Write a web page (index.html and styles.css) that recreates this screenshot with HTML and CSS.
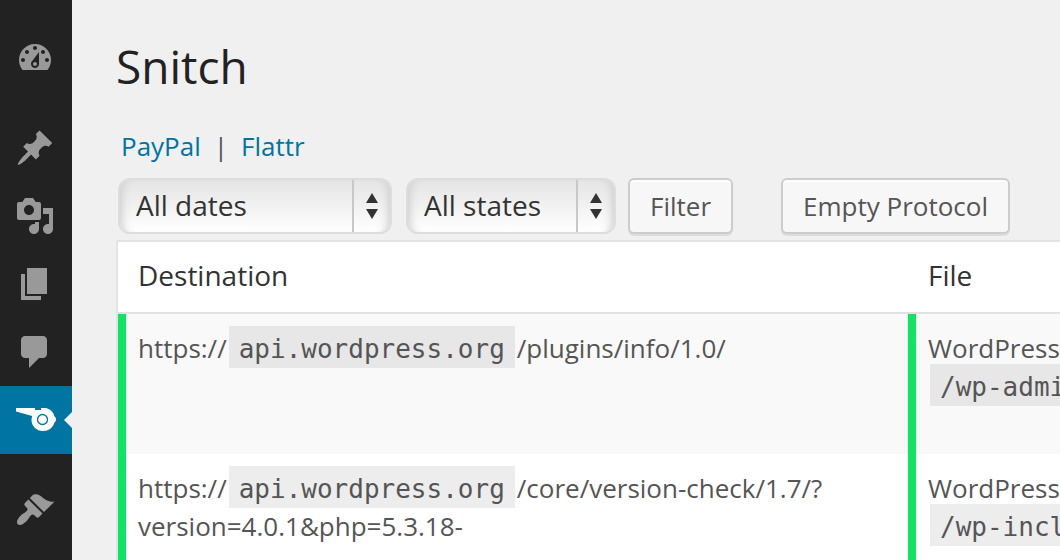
FILE: index.html
```html
<!DOCTYPE html>
<html lang="en">
<head>
<meta charset="utf-8">
<title>Snitch</title>
<link rel="stylesheet" href="styles.css">
</head>
<body>
<div class="layout">
  <nav class="menu" aria-label="Main menu">
    <a class="item" href="#dashboard" aria-label="Dashboard"><svg viewBox="0 0 20 20"><path fill-rule="evenodd" d="M3.76 16h12.48c1.1-1.37 1.76-3.11 1.76-5 0-4.42-3.58-8-8-8s-8 3.58-8 8c0 1.89.66 3.63 1.76 5zM10 4c.55 0 1 .45 1 1s-.45 1-1 1-1-.45-1-1 .45-1 1-1zM6 6c.55 0 1 .45 1 1s-.45 1-1 1-1-.45-1-1 .45-1 1-1zm8 0c.55 0 1 .45 1 1s-.45 1-1 1-1-.45-1-1 .45-1 1-1zm-5.37 5.55L12 7v6c0 1.1-.9 2-2 2s-2-.9-2-2c0-.57.24-1.08.63-1.45zM4 10c.55 0 1 .45 1 1s-.45 1-1 1-1-.45-1-1 .45-1 1-1zm12 0c.55 0 1 .45 1 1s-.45 1-1 1-1-.45-1-1 .45-1 1-1zm-5 3c0-.55-.45-1-1-1s-1 .45-1 1 .45 1 1 1 1-.45 1-1z"/></svg></a>
    <a class="item spaced" href="#posts" aria-label="Posts"><svg viewBox="0 0 20 20"><path d="M10.44 3.02l1.82-1.82 6.36 6.35-1.83 1.82c-1.05-.68-2.48-.57-3.41.36l-.75.75c-.92.93-1.04 2.35-.35 3.41l-1.83 1.82-2.41-2.41-2.8 2.79c-.42.42-3.38 2.71-3.8 2.29s1.86-3.39 2.28-3.81l2.79-2.79L4.1 9.36l1.83-1.82c1.05.69 2.48.57 3.4-.36l.75-.75c.93-.92 1.05-2.35.36-3.41z"/></svg></a>
    <a class="item" href="#media" aria-label="Media"><svg viewBox="0 0 20 20"><path fill-rule="evenodd" d="M13 11V4c0-.55-.45-1-1-1h-1.67L9 1H5L3.67 3H2c-.55 0-1 .45-1 1v7c0 .55.45 1 1 1h10c.55 0 1-.45 1-1zM7 4.5c1.38 0 2.5 1.12 2.5 2.5S8.38 9.5 7 9.5 4.5 8.38 4.5 7 5.62 4.5 7 4.5zM14 6h5v10.5c0 1.38-1.12 2.5-2.5 2.5S14 17.88 14 16.5s1.12-2.5 2.5-2.5c.17 0 .34.02.5.05V9h-3V6zm-4 8.05V13h2v3.5c0 1.38-1.12 2.5-2.5 2.5S7 17.88 7 16.5 8.12 14 9.5 14c.17 0 .34.02.5.05z"/></svg></a>
    <a class="item" href="#pages" aria-label="Pages"><svg viewBox="0 0 20 20"><path d="M6 15V2h10v13H6zm-1 1h8v2H3V5h2v11z"/></svg></a>
    <a class="item" href="#comments" aria-label="Comments"><svg viewBox="0 0 20 20"><path d="M5 2h9q.82 0 1.41.59T16 4v7q0 .82-.59 1.41T14 13h-2l-5 5v-5H5q-.82 0-1.41-.59T3 11V4q0-.82.59-1.41T5 2z"/></svg></a>
    <a class="item current" href="#snitch" aria-label="Snitch" aria-current="page"><svg viewBox="0 0 40 40"><path d="M1 8H20V10H26V8H30C35 8.500 38.500 12 39.500 16.500Q41 17 41 19.500Q41 21.500 39.500 22.500C38 27.500 33.500 31 28 31C21.500 31 16.500 26 16.500 20Q16.500 18 17.200 16L1 11.500Z"/><circle class="hole" cx="27.500" cy="19.500" r="5"/></svg></a>
    <a class="item spaced" href="#appearance" aria-label="Appearance"><svg viewBox="0 0 20 20"><path d="M14.48 11.06L7.41 3.99l1.5-1.5c.5-.56 2.3-.47 3.51.32 1.21.8 1.43 1.28 2.91 2.1 1.18.64 2.45 1.26 4.45.85zm-.71.71L6.7 4.7 4.93 6.47c-.39.39-.39 1.02 0 1.41l1.06 1.06c.39.39.39 1.03 0 1.42-.6.6-1.43 1.11-2.21 1.69-.35.26-.7.53-1.01.84C1.43 14.23.4 16.08 1.4 17.07c.99 1 2.84-.03 4.18-1.36.31-.31.58-.66.85-1.02.57-.78 1.08-1.61 1.69-2.21.39-.39 1.02-.39 1.41 0l1.06 1.06c.39.39 1.02.39 1.41 0z"/></svg></a>
  </nav>
  <main class="content">
    <h1 class="title">Snitch</h1>
    <div class="links"><a href="#paypal">PayPal</a><span>|</span><a href="#flattr">Flattr</a></div>
    <form class="toolbar">
      <div class="picker dates">
        <select aria-label="Filter by date"><option>All dates</option></select>
        <svg class="arrows" viewBox="0 0 12 26"><path d="M6 0L12 10H0zM0 16H12L6 26z"/></svg>
      </div>
      <div class="picker states">
        <select aria-label="Filter by state"><option>All states</option></select>
        <svg class="arrows" viewBox="0 0 12 26"><path d="M6 0L12 10H0zM0 16H12L6 26z"/></svg>
      </div>
      <button class="button" type="button">Filter</button>
      <button class="button empty" type="button">Empty Protocol</button>
    </form>
    <table class="log">
      <colgroup><col class="col-destination"><col class="col-file"></colgroup>
      <thead><tr><th scope="col">Destination</th><th scope="col">File</th></tr></thead>
      <tbody>
        <tr><td>https://<code>api.wordpress.org</code>/plugins/info/1.0/</td><td>WordPress:<br><code>/wp-admin</code></td></tr>
        <tr><td>https://<code>api.wordpress.org</code>/core/version-check/1.7/?<br>version=4.0.1&amp;php=5.3.18-</td><td>WordPress:<br><code>/wp-includes</code></td></tr>
      </tbody>
    </table>
  </main>
</div>
</body>
</html>
```

FILE: styles.css
```css
* { box-sizing: border-box; }

body {
  margin: 0;
  background: #f0f0f0;
  color: #555;
  font-family: "Open Sans", sans-serif;
  font-size: 26px;
  line-height: 38px;
  overflow: hidden;
}

a { color: #0074a2; text-decoration: none; }

.layout { display: flex; height: 100vh; }

.menu {
  flex: none;
  width: 72px;
  padding-top: 24px;
  background: #222;
}

.item {
  display: block;
  position: relative;
  padding: 14px 17px 14px 15px;
}

.item.spaced { margin-top: 22px; }

.item svg {
  display: block;
  width: 40px;
  height: 40px;
  fill: #999;
  overflow: visible;
}

.item.current { background: #0074a2; }
.item.current svg { fill: #fff; }
.item .hole { fill: none; stroke: #0074a2; stroke-width: 1.3; }

.item.current::after {
  content: "";
  position: absolute;
  right: 0;
  top: 26px;
  border: 8px solid transparent;
  border-left: 0;
  border-right-color: #f0f0f0;
}

.content {
  flex: 1;
  min-width: 0;
  padding: 37px 0 0 44px;
  overflow: hidden;
}

.title {
  margin: 0;
  color: #222;
  font-size: 46px;
  font-weight: 400;
  line-height: 58px;
}

.links {
  display: flex;
  gap: 12px;
  margin-top: 32px;
  padding-left: 5px;
}

.links span { padding: 0 1px; }

.toolbar {
  display: flex;
  align-items: center;
  margin: 13px 0 6px 2px;
}

.picker { display: grid; align-items: center; margin-right: 14px; }
.picker > * { grid-area: 1 / 1; }
.picker.dates { width: 274px; }
.picker.states { width: 210px; margin-right: 12px; }

.picker select {
  appearance: none;
  width: 100%;
  height: 56px;
  padding: 0 16px 2px;
  border: 2px solid #ddd;
  border-radius: 12px;
  background:
    linear-gradient(#c8c8c8, #c8c8c8) right 36px top / 2px 100% no-repeat,
    linear-gradient(#e4e4e4, #fff);
  box-shadow: inset 10px 0 8px -8px #ccc, inset -10px 0 8px -8px #ccc;
  color: #333;
  font: inherit;
  font-size: 28px;
}

.arrows {
  justify-self: end;
  width: 12px;
  height: 26px;
  margin-right: 14px;
  fill: #333;
  pointer-events: none;
}

.button {
  height: 56px;
  padding: 0 20px;
  border: 2px solid #ccc;
  border-radius: 6px;
  background: #f7f7f7;
  box-shadow: inset 0 2px 0 #fff, 0 2px 0 rgba(0, 0, 0, 0.08);
  color: #555;
  font: inherit;
}

.button.empty { margin-left: 48px; }

.log {
  width: 100%;
  min-width: 1184px;
  border: 2px solid #e4e4e4;
  border-spacing: 0;
  table-layout: fixed;
  background: #fff;
}

.col-destination { width: 790px; }

.log th {
  height: 72px;
  padding: 0 20px 4px;
  border-bottom: 2px solid #e1e1e1;
  color: #333;
  font-size: 28px;
  font-weight: 400;
  text-align: left;
}

.log td {
  height: 140px;
  padding: 15px 12px;
  border-left: 8px solid #0de563;
  vertical-align: top;
}

.log tbody tr:nth-child(odd) { background: #f9f9f9; }

.log code {
  margin: 0 2px;
  padding: 8px 10px 4px;
  background: #ededed;
  font-family: "DejaVu Sans Mono", monospace;
  line-height: 30px;
}

.log tbody tr:nth-child(odd) code { background: #e7e7e7; }
```
